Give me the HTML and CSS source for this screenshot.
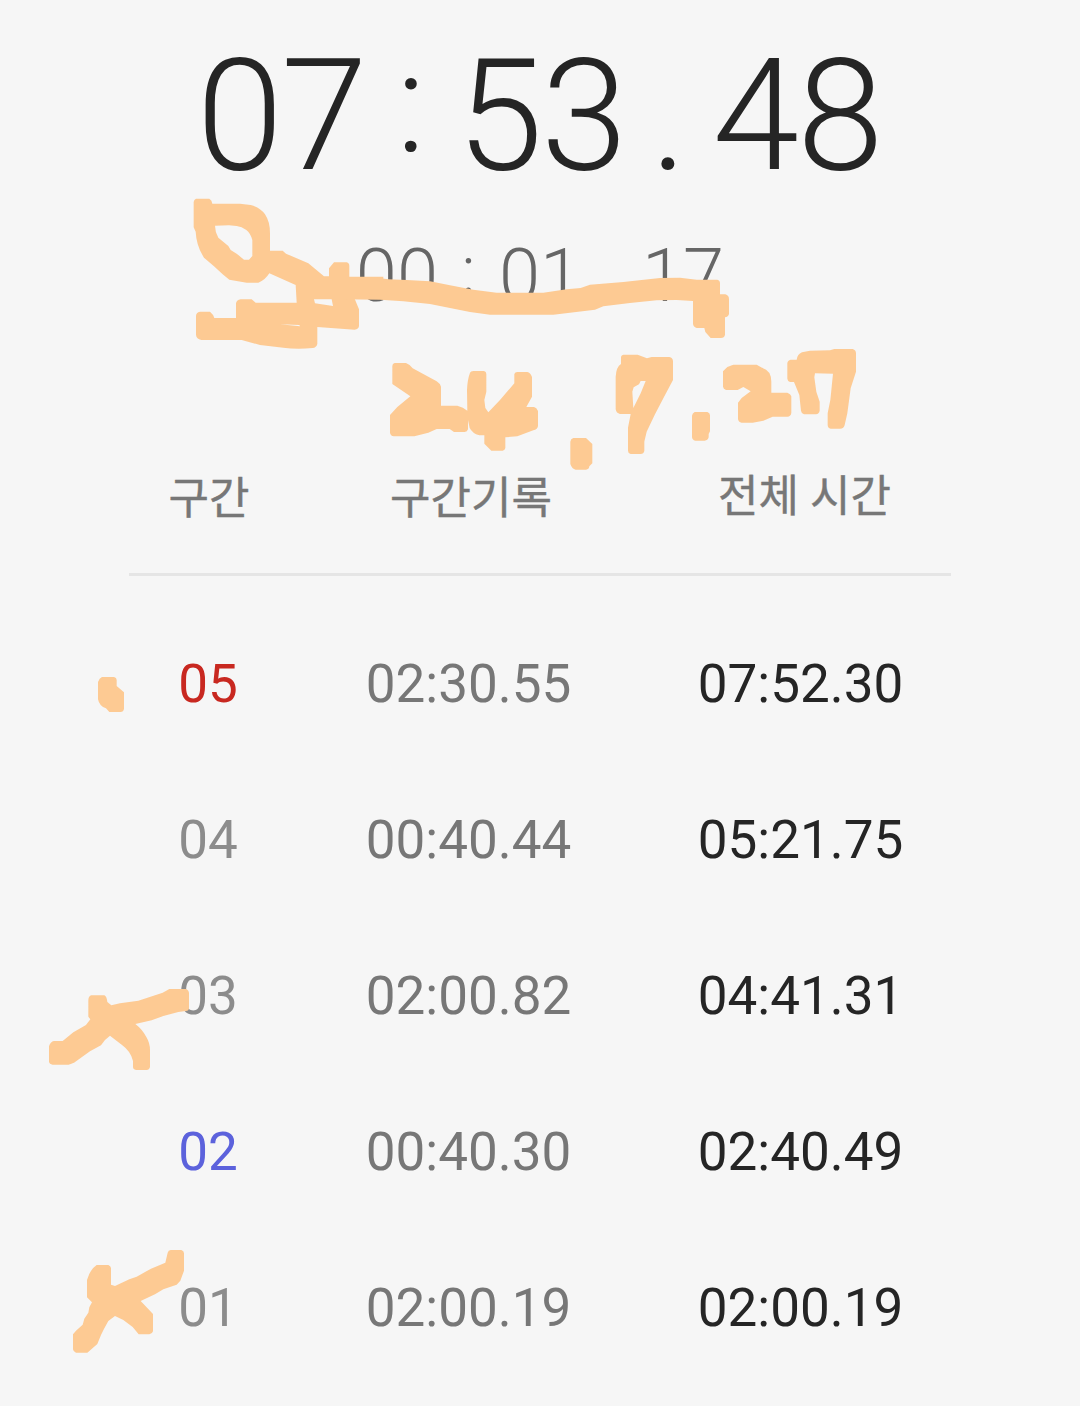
FILE: index.html
```html
<!DOCTYPE html>
<html lang="ko">
<head>
    <meta charset="UTF-8">
    <meta name="viewport" content="width=device-width, initial-scale=1.0">
    <title>스톱워치</title>
    <link rel="stylesheet" href="styles.css">
</head>
<body>
    <div class="stopwatch">
        <div class="time total">
            <span class="digits">07</span>
            <span class="colon">:</span>
            <span class="digits">53</span>
            <span class="dot">.</span>
            <span class="digits">48</span>
        </div>
        <div class="time current">
            <span class="digits">00</span>
            <span class="colon">:</span>
            <span class="digits">01</span>
            <span class="dot">.</span>
            <span class="digits">17</span>
        </div>

        <div class="lap-head">
            <span>구간</span>
            <span class="head-lap">구간기록</span>
            <span class="head-total">전체 시간</span>
        </div>

        <div class="laps">
            <div class="lap">
                <span class="no slowest">05</span>
                <span class="record">02:30.55</span>
                <span class="sum">07:52.30</span>
            </div>
            <div class="lap">
                <span class="no">04</span>
                <span class="record">00:40.44</span>
                <span class="sum">05:21.75</span>
            </div>
            <div class="lap">
                <span class="no">03</span>
                <span class="record">02:00.82</span>
                <span class="sum">04:41.31</span>
            </div>
            <div class="lap">
                <span class="no fastest">02</span>
                <span class="record">00:40.30</span>
                <span class="sum">02:40.49</span>
            </div>
            <div class="lap">
                <span class="no">01</span>
                <span class="record">02:00.19</span>
                <span class="sum">02:00.19</span>
            </div>
        </div>

        <!-- 손으로 그린 표시 -->
        <svg class="marks" width="1080" height="1406" viewBox="0 0 1080 1406">
            <g transform="translate(180 190) scale(.33333)">
                <path fill-rule="evenodd" d="M48 26H88Q96 30 97 41H180L212 45Q240 52 255 73Q270 95 270 130V182H308L318 191L385 220L432 259H447V235L462 217H500Q508 219 508 228V260H610V326H524L537 358V408Q536 418 524 419L412 411V462Q409 473 398 474Q350 479 310 473L240 465L185 450H64Q49 447 48 434V378Q48 367 60 365H90Q100 373 103 384H168V340Q170 330 182 328H215L227 338H350L347 285L268 250Q255 271 235 278H200L148 269L128 253L102 229L72 203Q49 168 47 125L41 112V36Q42 28 48 26ZM105 107Q105 125 115 143L145 168L152 180L170 191L192 209H207L217 198V150Q211 129 199 120Q185 109 170 108L147 106ZM402 328L405 340L459 348L455 328ZM300 403L360 409L358 405Z"/>
            </g>
            <g transform="translate(340 230) scale(.33333)">
                <path d="M0 141H60L110 143L145 148L200 150L270 154L330 166L400 179L470 188H610L680 178L722 174L750 164L850 156L960 144L1020 143L1070 149H1132Q1140 151 1140 160V193H1156Q1167 197 1167 207V252Q1165 261 1155 262V314Q1153 324 1143 324H1112L1096 306L1093 294H1070Q1059 291 1059 280V213L1010 210L950 211L870 219L790 229L765 239L640 254H450L390 246L330 234L270 222L190 214L120 209L0 208Z"/>
            </g>
            <g transform="translate(380 340) scale(.33333)">
                <path d="M44 69H78Q91 74 98 85L170 124Q182 132 183 140V197H232Q250 201 262 212L261 150Q262 120 270 98Q272 93 280 93H312Q319 95 319 102V155L313 180L316 204L325 217L360 180L403 130V102Q405 96 412 96H442Q451 98 456 111V170L439 201H462Q470 203 474 213V258Q473 268 460 271L412 289L376 292V324Q375 330 368 332H334L313 311V286H298Q277 280 269 264L264 240V268Q262 276 254 276H222L209 267H170L145 278L103 289H42Q31 287 30 278V225L52 201L91 169L37 132V78Q37 71 44 69ZM580 294H618L637 312V370L628 379Q627 389 618 389H587Q576 387 571 372V305Q572 296 580 294Z"/>
            </g>
            <g transform="translate(600 340) scale(.33333)">
                <path fill-rule="evenodd" d="M70 44H113L141 55L155 51H208Q219 53 219 64V120L192 171L165 223L140 275L133 305V333Q131 342 122 342H92Q84 340 84 332V263L92 222H60Q49 220 47 208V110Q49 80 63 72V51Q64 45 70 44ZM137 123H122L117 133L101 142L97 155L100 204L122 160ZM284 216H322Q330 219 330 226V274L326 282V292Q323 302 314 302H286Q276 299 276 290V227Q277 219 284 216ZM400 74H470L486 83Q514 91 514 125V158H562Q572 161 574 169V218Q573 229 562 230H518L490 242L458 248H425Q415 246 414 237V188L425 174L452 154L430 141L413 150H378Q370 147 369 140V94L382 81ZM690 31L703 27H758Q768 30 768 40V95L752 145L742 220L734 255Q732 266 720 266H692Q683 264 683 255V220L691 180L699 101L645 100L643 112L649 155L659 185V212Q657 222 648 223H612Q604 220 603 212L598 165L582 126H570Q563 124 562 116V70Q563 61 572 59H590Q592 43 606 37L630 32Z"/>
            </g>
            <g transform="translate(40 640) scale(.33333)">
                <path d="M186 111H222Q230 113 230 120V138L252 157V207Q250 216 242 216H208L198 205Q178 199 174 178V126Q178 114 186 111Z"/>
            </g>
            <g transform="translate(40 960) scale(.33333)">
                <path d="M154 106H193Q200 108 202 126L214 136L240 130L295 122L368 98L388 87H438Q447 91 447 100V145Q446 153 438 153L415 156L370 168L335 181L286 192Q307 208 319 231Q330 249 330 270V320Q329 329 320 330H288Q279 328 279 320V303Q272 274 247 256L210 227L195 240L183 256L150 274L102 308L86 314H38Q28 312 27 305V259Q31 245 42 243H68L100 217L138 195L151 178L145 170V120Q146 108 154 106Z"/>
            </g>
            <g transform="translate(60 1240) scale(.33333)">
                <path d="M332 30H364Q372 33 372 40V92L361 122L350 134L310 148L285 163L242 183L279 222V274Q277 282 268 283H236L218 261L190 240L165 228L145 243L133 265L123 285L112 312L82 338H48Q40 336 39 328V283L48 272L68 254L73 236L85 218L88 202L96 187L81 172V120Q90 88 110 75H145Q152 78 153 84V134L165 138L208 118L230 110L273 86L316 68L323 38Q325 31 332 30Z"/>
            </g>
        </svg>
    </div>
</body>
</html>
```

FILE: styles.css
```css
* {
    box-sizing: border-box;
}
body {
    margin: 0;
    background-color: #f6f6f6;
    font-family: Roboto, "Noto Sans CJK KR", sans-serif;
}
.stopwatch {
    position: relative;
    width: 1080px;
    height: 1406px;
    padding-top: 16px;
    overflow: hidden;
}
.time {
    display: flex;
    justify-content: center;
    font-weight: 300;
}
.time span {
    text-align: center;
}
.total {
    height: 200px;
    margin-left: -2px;
    font-size: 156px;
    line-height: 200px;
    color: #252525;
}
.total .digits {
    letter-spacing: -2px;
}
.total .colon {
    width: 91px;
    margin-top: -13px;
    font-size: 140px;
}
.total .dot {
    width: 87px;
}
.current {
    height: 100px;
    margin-top: 10px;
    font-size: 74px;
    line-height: 100px;
    color: #666;
}
.current .colon {
    width: 61px;
    margin-top: -5px;
    font-size: 66px;
}
.current .dot {
    width: 61px;
}
.lap-head,
.lap {
    display: grid;
    grid-template-columns: 158px 363px 301px;
    text-align: center;
}
.lap-head {
    height: 250px;
    width: 822px;
    margin: 0 auto;
    padding-top: 143px;
    font-size: 44px;
    line-height: 60px;
    color: #777;
    -webkit-text-stroke: 0.4px #777;
    border-bottom: 3px solid #e5e5e5;
}
.lap-head span {
    padding-left: 2px;
}
.lap-head .head-lap {
    padding-left: 5px;
}
.lap-head .head-total {
    margin-top: -2px;
    padding-left: 8px;
}
.lap {
    width: 822px;
    height: 156px;
    margin: 0 auto;
    font-size: 53px;
    line-height: 156px;
}
.laps {
    padding-top: 30px;
}
.no {
    color: #8c8c8c;
}
.slowest {
    color: #c82820;
}
.fastest {
    color: #5c62dc;
}
.record {
    color: #777;
}
.sum {
    color: #252525;
}
.marks {
    position: absolute;
    top: 0;
    left: 0;
    fill: #fdca93;
}
```
